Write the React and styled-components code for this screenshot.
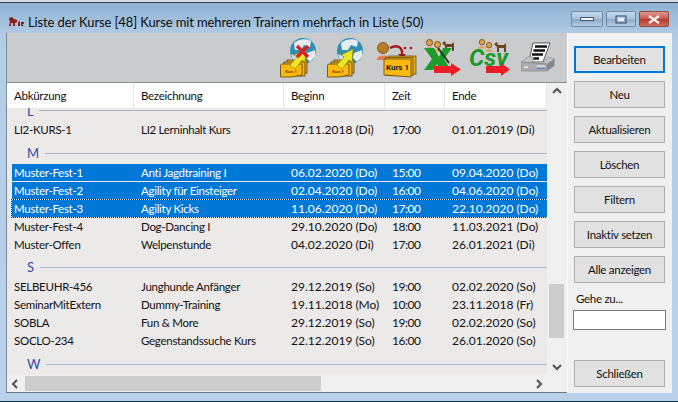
import React from 'react'
import styled, { createGlobalStyle } from 'styled-components'

const GlobalStyle = createGlobalStyle`
  html, body { margin: 0; padding: 0; background: #0f3a44; }
  * { box-sizing: border-box; }
`

const Window = styled.div`
  width: 678px;
  height: 402px;
  overflow: hidden;
  display: flex;
  flex-direction: column;
  background: linear-gradient(180deg, #8db2d2 0%, #b4cde6 9%, #b9d1ea 100%);
  border-top: 2px solid #d6dde4;
  border-bottom: 1px solid #0f3a44;
  font-family: Lato, Roboto, sans-serif;
  font-size: 11.5px;
  letter-spacing: -0.28px;
  color: #111;
`

const TopEdge = styled.div`
  height: 1px;
  flex: none;
  background: #3c4348;
`

const TitleBar = styled.div`
  height: 30px;
  flex: none;
  display: flex;
  align-items: center;
  padding: 8px 9px 0 8px;
  font-size: 13px;
  letter-spacing: -0.11px;
  color: #0d0d0d;
`

const TitleText = styled.span`
  margin-left: 4px;
  flex: 1;
`

const Controls = styled.div`
  display: flex;
  gap: 3px;
  margin-top: -6px;
`

const ControlButton = styled.div`
  width: ${p => (p.$wide ? 32 : 30)}px;
  height: 16px;
  display: flex;
  align-items: center;
  justify-content: center;
  border: 1px solid ${p => (p.$close ? '#8c4a42' : '#6f8aa5')};
  border-radius: 2px;
  background: ${p =>
    p.$close
      ? 'linear-gradient(180deg, #dc9a90 0%, #c9584c 48%, #b8352a 55%, #cf6d5f 100%)'
      : 'linear-gradient(180deg, #c6d9ea 0%, #a9c3da 48%, #8caac6 55%, #b4cde2 100%)'};
`

const Client = styled.div`
  flex: none;
  height: 360px;
  margin: 0 6px;
  display: flex;
`

const LeftPane = styled.div`
  width: 561px;
  flex: none;
  display: flex;
  flex-direction: column;
  border-left: 1px solid #7b8a98;
  border-bottom: 1px solid #6f7a84;
`

const Toolbar = styled.div`
  height: 50px;
  flex: none;
  display: grid;
  grid-template-columns: 47px 50px 47px 45px 52px 34px;
  justify-content: end;
  align-items: start;
  padding: 5px 12px 0 0;
  background: #c9cbcc;
  border-bottom: 1px solid #8e9193;
`

const ListArea = styled.div`
  flex: 1;
  min-height: 0;
  display: grid;
  grid-template-columns: 540px 19px;
  grid-template-rows: 292px 17px;
  background: #f0f0f0;
`

const ListBody = styled.div`
  overflow: hidden;
  background: #ece9e9;
`

const HeaderRow = styled.div`
  height: 25px;
  display: grid;
  grid-template-columns: 127px 150px 101px 60px 102px;
  background: #fff;
`

const HeaderCell = styled.div`
  display: flex;
  align-items: center;
  padding-left: 7px;
  border-right: 1px solid #e3e5e8;
`

const Row = styled.div`
  height: 17px;
  margin: 0 0 1px 5px;
  display: grid;
  grid-template-columns: 122px 150px 101px 60px 102px;
  align-items: center;
  background: ${p => (p.$selected ? '#0078d7' : 'transparent')};
  color: ${p => (p.$selected ? '#fff' : '#111')};
  outline: ${p => (p.$focused ? '1px dotted #0b2c4a' : 'none')};
`

const cellSpacing = { text: -0.28, date: 0, time: -0.5 }

const Cell = styled.div`
  padding-left: 7px;
  white-space: nowrap;
  font-size: ${p => (p.$kind === 'text' ? 11.5 : 12)}px;
  letter-spacing: ${p => cellSpacing[p.$kind]}px;
  &:first-child { padding-left: 2px; }
`

const Group = styled.div`
  height: ${p => p.$height}px;
  display: flex;
  align-items: ${p => (p.$clipped ? 'flex-start' : 'center')};
  padding: ${p => (p.$clipped ? '0 0 0 20px' : '3px 0 0 20px')};
  color: #2f4ba5;
  font-size: 13px;
  line-height: 13px;
  overflow: hidden;
`

const GroupLetter = styled.span`
  margin-top: ${p => (p.$clipped ? -3 : 0)}px;
`

const GroupLine = styled.div`
  flex: 1;
  height: 1px;
  margin: ${p => (p.$clipped ? '2px 0 0 6px' : '0 0 0 6px')};
  background: #aeb4c8;
`

const VScroll = styled.div`
  display: flex;
  flex-direction: column;
  align-items: center;
  background: #f0f0f0;
`

const ArrowBox = styled.div`
  flex: none;
  height: 17px;
  width: ${p => p.$w || 17}px;
  display: flex;
  align-items: center;
  justify-content: center;
`

const VTrack = styled.div`
  flex: 1;
  width: 100%;
  padding: ${p => p.$top}px 2px 0;
`

const VThumb = styled.div`
  height: 54px;
  background: #cdcdcd;
`

const HScroll = styled.div`
  display: flex;
  align-items: center;
  background: #f0f0f0;
`

const HTrack = styled.div`
  flex: 1;
  height: 15px;
`

const HThumb = styled.div`
  width: 296px;
  height: 100%;
  background: #cdcdcd;
`

const SidePanel = styled.div`
  flex: 1;
  display: flex;
  flex-direction: column;
  padding: 13px 6px 0 6px;
  background: #f0f0f0;
  border-left: 1px solid #fafafa;
`

const ActionList = styled.div`
  display: flex;
  flex-direction: column;
  gap: 8px;
  padding-right: 1px;
`

const ActionButton = styled.div`
  height: 27px;
  display: flex;
  align-items: center;
  justify-content: center;
  background: #e1e1e1;
  border: ${p => (p.$default ? '2px solid #0078d7' : '1px solid #adadad')};
  color: #111;
`

const GotoLabel = styled.div`
  margin-top: 8px;
  height: 16px;
  line-height: 16px;
  padding-left: 2px;
`

const GotoInput = styled.div`
  margin: 3px 0 0 -1px;
  width: 93px;
  height: 20px;
  background: #fff;
  border: 1px solid #7a7a7a;
`

const CloseSlot = styled.div`
  margin-top: 30px;
  padding-right: 1px;
`

const Logo = () => (
  <svg width="16" height="10" viewBox="0 0 16 10">
    <path d="M1 1 L4 0 L6 2 L9 3 L9 5 L7 6 L7 9 L5 9 L5 6 L3 6 L3 9 L1 9 L2 5 Z" fill="#8e1c1c" />
    <path d="M10 5 L12 4 L12 9 L10 9 Z M13 5 L16 5 L16 7 L14 7 L16 9 L13 9 Z" fill="#8e1c1c" />
  </svg>
)

const Folders = () => (
  <g>
    <rect x="7" y="22" width="20" height="13" fill="#eeaa1a" stroke="#55470f" strokeWidth="0.8" />
    <rect x="4" y="24" width="21" height="14" fill="#f2b01c" stroke="#55470f" strokeWidth="0.8" />
    <path d="M0.5 27 L2 26 L22 26 L22 37 L12 39 L0.5 39 Z" fill="#fbb80f" stroke="#55470f" strokeWidth="0.8" />
    <text x="11" y="34.5" textAnchor="middle" fontSize="4" fontWeight="700" letterSpacing="0" fontFamily="Roboto, sans-serif" fill="#7a3a10">Kurs 1</text>
  </g>
)

const Globe = () => (
  <g>
    <circle cx="23" cy="13" r="13" fill="#2f8fb4" />
    <path d="M14 5 C18 1 26 0 31 3 L30 9 L24 7 L21 12 L15 12 Z M27 15 L35 12 L35.5 18 L30 24 L26 20 Z" fill="#e6ecee" />
    <path d="M11 16 L16 18 L18 24 L13 22 Z" fill="#cfe0e6" />
  </g>
)

const Arrow = () => (
  <path d="M10 27 L17 19 L14 17 L26 11 L25 24 L22 22 L15 31 Z" fill="#e9e726" stroke="#7d7a18" strokeWidth="0.5" />
)

const GlobeRemoveIcon = () => (
  <svg width="38" height="40" viewBox="0 0 38 40">
    <Globe />
    <Folders />
    <Arrow />
    <path d="M17 8 L28 19 M28 8 L17 19" stroke="#d81f26" strokeWidth="3.2" />
  </svg>
)

const GlobeAddIcon = () => (
  <svg width="38" height="40" viewBox="0 0 38 40">
    <Globe />
    <Folders />
    <Arrow />
  </svg>
)

const Person = ({ x, y, s = 1, shirt = '#e7a14e' }) => (
  <g transform={`translate(${x} ${y}) scale(${s})`}>
    <circle cx="5" cy="4" r="3.4" fill="#e2a24a" stroke="#6d4a1a" strokeWidth="1" />
    <path d="M0 12 C1 8 9 8 10 12 Z" fill={shirt} />
  </g>
)

const Dog = ({ x, y }) => (
  <path
    transform={`translate(${x} ${y})`}
    d="M0 2 L3 0 L4 3 L10 3 L12 1 L12 10 L10 10 L10 6 L5 6 L5 10 L3 10 L3 5 Z"
    fill="#6a4420"
  />
)

const AssignCourseIcon = () => (
  <svg width="40" height="40" viewBox="0 0 40 40">
    <circle cx="6" cy="10" r="5.5" fill="#b87d24" stroke="#6d4a1a" strokeWidth="0.8" />
    <path d="M-1 22 C1 16 13 16 16 22 Z" fill="#e9794a" />
    <path d="M13 10 C20 6 26 9 25 17" fill="none" stroke="#a5171d" strokeWidth="2.4" />
    <path d="M21 16 L29 16 L25 21 Z" fill="#a5171d" />
    <circle cx="28" cy="10" r="1.3" fill="#a5171d" />
    <circle cx="34" cy="10" r="1.3" fill="#a5171d" />
    <rect x="12" y="18" width="27" height="18" fill="#eeaa1a" stroke="#55470f" strokeWidth="0.7" />
    <rect x="9" y="19.5" width="27" height="18" fill="#f2b01c" stroke="#55470f" strokeWidth="0.7" />
    <path d="M7 21 L34 21 L34 39 L7 37 Z" fill="#fbb80f" stroke="#55470f" strokeWidth="0.8" />
    <text x="20.5" y="32" textAnchor="middle" fontSize="8" fontWeight="700" letterSpacing="0" fontFamily="Roboto, sans-serif" fill="#222">Kurs 1</text>
  </svg>
)

const ExcelIcon = () => (
  <svg width="38" height="40" viewBox="0 0 38 40">
    <Person x={1} y={1} s={0.9} />
    <Person x={9} y={3} s={0.9} />
    <Dog x={18} y={3} />
    <path d="M0 10 L10 10 L15 19 L19 10 L28 10 L20 21 L27 32 L16 32 L13 26 L9 32 L0 32 L8 21 Z" fill="#1d9c2b" />
    <path d="M14 10 L25 25" stroke="#1e3a1e" strokeWidth="2" />
    <path d="M10 28 L27 28 L27 25 L37 31.5 L27 38 L27 35 L10 35 Z" fill="#ee1c25" />
  </svg>
)

const CsvIcon = () => (
  <svg width="42" height="40" viewBox="0 0 42 40">
    <Person x={9} y={1} s={0.8} />
    <Person x={16} y={4} s={0.8} />
    <Dog x={25} y={4} />
    <text x="0" y="28" fontSize="24" fontWeight="700" fontStyle="italic" letterSpacing="0" fontFamily="Roboto, sans-serif" fill="#179a2a">Csv</text>
    <path d="M17 28 L32 28 L32 25 L41 31.5 L32 38 L32 35 L17 35 Z" fill="#ee1c25" />
  </svg>
)

const PrinterIcon = () => (
  <svg width="34" height="40" viewBox="0 0 34 40">
    <path d="M12 5 L29 5 L22 24 L8 24 Z" fill="#fff" stroke="#333" strokeWidth="0.8" />
    <path d="M14 8.5 L26 8.5 M12.5 12.5 L24 12.5 M11 16.5 L22 16.5 M10 20.5 L18 20.5" stroke="#111" strokeWidth="2.4" />
    <path d="M0.5 24 L7 19 L13 19 L11 24 L24 24 L27 19 L33.5 21 L26 26 Z" fill="#c3c6c9" stroke="#777" strokeWidth="0.5" />
    <path d="M0.5 24 L26 26 L26 33 L0.5 33 Z" fill="#a9acb0" stroke="#777" strokeWidth="0.5" />
    <path d="M26 26 L33.5 21 L33.5 28 L26 33 Z" fill="#84878b" />
    <rect x="3" y="28.5" width="4" height="1.4" fill="#eee" />
    <rect x="16" y="27.5" width="8" height="1.2" fill="#e6f0f8" />
    <rect x="16" y="30" width="8" height="1.2" fill="#5d86b0" />
  </svg>
)

const Chevron = ({ dir }) => {
  const paths = {
    up: 'M1 6 L5 2 L9 6',
    down: 'M1 3 L5 7 L9 3',
    left: 'M6 1 L2 5 L6 9',
    right: 'M3 1 L7 5 L3 9',
  }
  return (
    <svg width="10" height="10" viewBox="0 0 10 10">
      <path d={paths[dir]} fill="none" stroke="#505050" strokeWidth="2" />
    </svg>
  )
}

const columns = ['Abkürzung', 'Bezeichnung', 'Beginn', 'Zeit', 'Ende']
const cellKinds = ['text', 'text', 'date', 'time', 'date']

const listItems = [
  { group: 'L', height: 13, clipped: true },
  { cells: ['LI2-KURS-1', 'LI2 Lerninhalt Kurs', '27.11.2018 (Di)', '17:00', '01.01.2019 (Di)'] },
  { group: 'M', height: 25 },
  { cells: ['Muster-Fest-1', 'Anti Jagdtraining I', '06.02.2020 (Do)', '15:00', '09.04.2020 (Do)'], selected: true },
  { cells: ['Muster-Fest-2', 'Agility für Einsteiger', '02.04.2020 (Do)', '16:00', '04.06.2020 (Do)'], selected: true },
  { cells: ['Muster-Fest-3', 'Agility Kicks', '11.06.2020 (Do)', '17:00', '22.10.2020 (Do)'], selected: true, focused: true },
  { cells: ['Muster-Fest-4', 'Dog-Dancing I', '29.10.2020 (Do)', '18:00', '11.03.2021 (Do)'] },
  { cells: ['Muster-Offen', 'Welpenstunde', '04.02.2020 (Di)', '17:00', '26.01.2021 (Di)'] },
  { group: 'S', height: 24 },
  { cells: ['SELBEUHR-456', 'Junghunde Anfänger', '29.12.2019 (So)', '19:00', '02.02.2020 (So)'] },
  { cells: ['SeminarMitExtern', 'Dummy-Training', '19.11.2018 (Mo)', '10:00', '23.11.2018 (Fr)'] },
  { cells: ['SOBLA', 'Fun & More', '29.12.2019 (So)', '19:00', '02.02.2020 (So)'] },
  { cells: ['SOCLO-234', 'Gegenstandssuche Kurs', '22.12.2019 (So)', '16:00', '26.01.2020 (So)'] },
  { group: 'W', height: 25 },
]

const actions = ['Neu', 'Aktualisieren', 'Löschen', 'Filtern', 'Inaktiv setzen', 'Alle anzeigen']

export default function App() {
  return (
    <>
      <GlobalStyle />
      <Window>
        <TopEdge />
        <TitleBar>
          <Logo />
          <TitleText>Liste der Kurse [48] Kurse mit mehreren Trainern mehrfach in Liste (50)</TitleText>
          <Controls>
            <ControlButton $wide>
              <svg width="14" height="6" viewBox="0 0 14 6"><rect x="0.5" y="1.5" width="13" height="3" fill="#f4f7fa" stroke="#45586c" /></svg>
            </ControlButton>
            <ControlButton>
              <svg width="12" height="9" viewBox="0 0 12 9"><rect x="1" y="1" width="10" height="7" fill="none" stroke="#34495e" strokeWidth="1" /><rect x="3" y="3" width="6" height="3" fill="#e8eff6" /></svg>
            </ControlButton>
            <ControlButton $close>
              <svg width="14" height="9" viewBox="0 0 14 9"><path d="M2 1 L12 8 M12 1 L2 8" stroke="#f6f0ee" strokeWidth="2.4" /></svg>
            </ControlButton>
          </Controls>
        </TitleBar>
        <Client>
          <LeftPane>
            <Toolbar>
              <GlobeRemoveIcon />
              <GlobeAddIcon />
              <AssignCourseIcon />
              <ExcelIcon />
              <CsvIcon />
              <PrinterIcon />
            </Toolbar>
            <ListArea>
              <ListBody>
                <HeaderRow>
                  {columns.map(c => <HeaderCell key={c}>{c}</HeaderCell>)}
                </HeaderRow>
                {listItems.map((item, i) =>
                  item.group ? (
                    <Group key={item.group} $height={item.height} $clipped={item.clipped}>
                      <GroupLetter $clipped={item.clipped}>{item.group}</GroupLetter>
                      <GroupLine $clipped={item.clipped} />
                    </Group>
                  ) : (
                    <Row key={i} $selected={item.selected} $focused={item.focused}>
                      {item.cells.map((c, j) => <Cell key={j} $kind={cellKinds[j]}>{c}</Cell>)}
                    </Row>
                  )
                )}
              </ListBody>
              <VScroll>
                <ArrowBox><Chevron dir="up" /></ArrowBox>
                <VTrack $top={184}><VThumb /></VTrack>
                <ArrowBox><Chevron dir="down" /></ArrowBox>
              </VScroll>
              <HScroll>
                <ArrowBox $w={18}><Chevron dir="left" /></ArrowBox>
                <HTrack><HThumb /></HTrack>
                <ArrowBox><Chevron dir="right" /></ArrowBox>
              </HScroll>
              <VScroll />
            </ListArea>
          </LeftPane>
          <SidePanel>
            <ActionList>
              <ActionButton $default>Bearbeiten</ActionButton>
              {actions.map(a => <ActionButton key={a}>{a}</ActionButton>)}
            </ActionList>
            <GotoLabel>Gehe zu...</GotoLabel>
            <GotoInput />
            <CloseSlot>
              <ActionButton>Schließen</ActionButton>
            </CloseSlot>
          </SidePanel>
        </Client>
      </Window>
    </>
  )
}
